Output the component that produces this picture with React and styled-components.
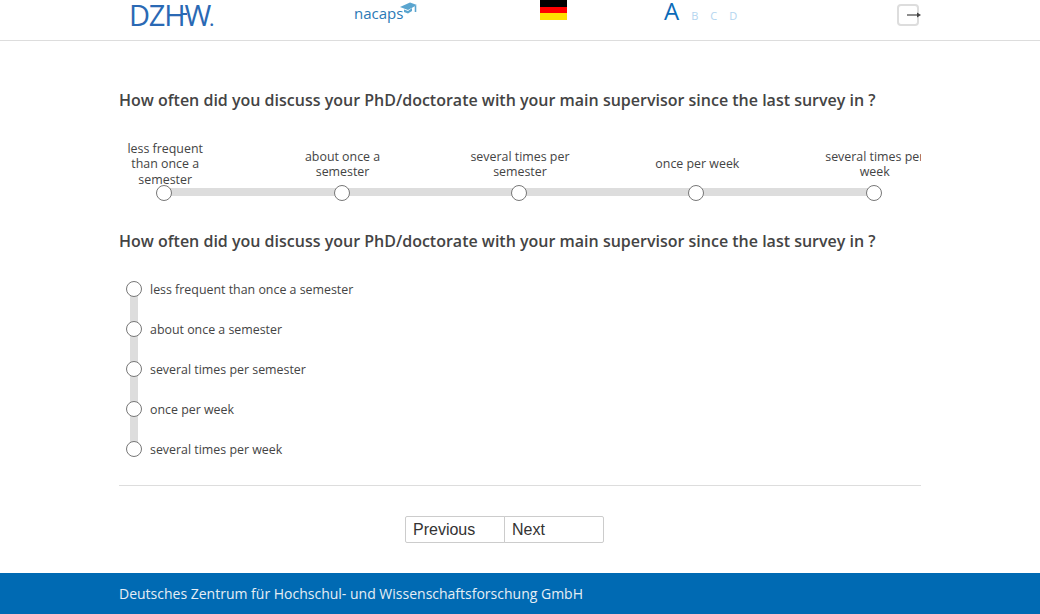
import React from "react";
import styled, { createGlobalStyle } from "styled-components";

const OPTIONS = [
  "less frequent than once a semester",
  "about once a semester",
  "several times per semester",
  "once per week",
  "several times per week",
];
const QUESTION =
  "How often did you discuss your PhD/doctorate with your main supervisor since the last survey in ?";

const App = () => {
  return (
    <Page>
      <GlobalStyle />
      <Header>
        <HeaderInner>
          <DzhwLogo>
            DZH<WPart>W</WPart>
            <Dot>.</Dot>
          </DzhwLogo>
          <NacapsLogo>
            nacaps
            <svg width="17" height="14" viewBox="0 0 17 14">
              <path d="M0 5 L10 0.5 L17 3 L8 8 Z" fill="#5aa5cf" />
              <path d="M4 7.5 L4 10 L8 11.5 L12 9 L12 6 L8 9 Z" fill="#5aa5cf" />
              <path d="M15.5 4 L15.5 10" stroke="#5aa5cf" strokeWidth="1.6" />
            </svg>
          </NacapsLogo>
          <Flag>
            <Stripe color="#000" />
            <Stripe color="#f00" />
            <Stripe color="#ffe000" />
          </Flag>
          <FontSizes>
            <FontSize $active>A</FontSize>
            <FontSize>B</FontSize>
            <FontSize>C</FontSize>
            <FontSize>D</FontSize>
          </FontSizes>
          <LogoutButton>
            <svg width="14" height="8" viewBox="0 0 14 8">
              <path d="M0 4 H11" stroke="#444" strokeWidth="1.2" />
              <path d="M10 1.5 L14 4 L10 6.5 Z" fill="#444" />
            </svg>
          </LogoutButton>
        </HeaderInner>
      </Header>
      <Main>
        <Question>{QUESTION}</Question>
        <Scale>
          {OPTIONS.map((label, i) => (
            <ScaleCell key={label} $last={i === OPTIONS.length - 1}>
              <ScaleLabel $narrow={i === 0}>{label}</ScaleLabel>
              <Radio />
            </ScaleCell>
          ))}
        </Scale>
        <SecondQuestion>{QUESTION}</SecondQuestion>
        <List>
          {OPTIONS.map((label, i) => (
            <ListRow key={label} $last={i === OPTIONS.length - 1}>
              <Radio />
              <ListLabel>{label}</ListLabel>
            </ListRow>
          ))}
        </List>
        <Divider />
        <Pager>
          <PagerButton>Previous</PagerButton>
          <PagerButton $right>Next</PagerButton>
        </Pager>
      </Main>
      <Footer>
        <FooterInner>Deutsches Zentrum für Hochschul- und Wissenschaftsforschung GmbH</FooterInner>
      </Footer>
    </Page>
  );
};

export default App;

const GlobalStyle = createGlobalStyle`
  html, body {
    margin: 0;
    padding: 0;
    background: #fff;
  }
  * {
    box-sizing: border-box;
  }
`;

const Page = styled.div`
  width: 1040px;
  height: 614px;
  display: flex;
  flex-direction: column;
  overflow: hidden;
  font-family: "Open Sans", sans-serif;
  color: #444;
`;

const Header = styled.header`
  height: 41px;
  border-bottom: 1px solid #ddd;
  flex-shrink: 0;
`;

const HeaderInner = styled.div`
  width: 802px;
  height: 40px;
  margin-left: 119px;
  display: grid;
  grid-template-columns: 235px 186px 124px 233px 1fr;
  overflow: hidden;
`;

const DzhwLogo = styled.div`
  margin: 0 0 0 10px;
  height: 40px;
  font-family: "Open Sans", sans-serif;
  font-weight: 400;
  font-size: 29px;
  line-height: 29px;
  letter-spacing: -1.2px;
  color: #2a69b4;
`;

/* the crossbar of the H runs on into the W */
const WPart = styled.span`
  position: relative;
  letter-spacing: -2px;
  &::before {
    content: "";
    position: absolute;
    left: -3px;
    top: 18px;
    width: 6px;
    height: 2px;
    background: #2a69b4;
  }
`;

const Dot = styled.span`
  font-weight: 600;
  font-size: 18px;
`;

const NacapsLogo = styled.div`
  display: flex;
  align-items: flex-start;
  height: 40px;
  padding-top: 4px;
  font-size: 15px;
  line-height: 18px;
  color: #2a79b5;
  svg {
    margin: -2px 0 0 -3px;
  }
`;

const Flag = styled.div`
  width: 27px;
  height: 20px;
  display: flex;
  flex-direction: column;
`;

const Stripe = styled.div`
  flex: 1;
  background: ${(props) => props.color};
`;

const FontSizes = styled.div`
  display: flex;
  align-items: baseline;
  height: 40px;
  gap: 12px;
  line-height: 22px;
`;

const FontSize = styled.span`
  font-size: ${(props) => (props.$active ? "24px" : "11px")};
  color: ${(props) => (props.$active ? "#0a6ab8" : "#b3d5ef")};
`;

const LogoutButton = styled.div`
  width: 22px;
  height: 22px;
  margin-top: 4px;
  padding: 0 0 0 8px;
  display: flex;
  align-items: center;
  border: 2px solid #ddd;
  border-radius: 4px;
  svg {
    flex-shrink: 0;
  }
`;

const Main = styled.main`
  flex: 1;
  width: 802px;
  margin-left: 119px;
`;

const Question = styled.h2`
  margin: 48px 0 0;
  font-size: 16px;
  line-height: 22px;
  font-weight: 600;
  color: #444;
`;

const SecondQuestion = styled(Question)`
  margin-top: 29px;
`;

const Scale = styled.div`
  width: 802px;
  margin-top: 29px;
  display: flex;
  overflow: hidden;
`;

const ScaleCell = styled.div`
  flex: 0 0 177.4px;
  display: flex;
  flex-direction: column;
  align-items: center;
  position: relative;
  &:first-child {
    margin-left: -43.5px;
  }
  ${(props) =>
    !props.$last &&
    `&::after {
      content: "";
      position: absolute;
      left: 50%;
      width: 100%;
      bottom: 5px;
      height: 8px;
      background: #ddd;
    }`}
`;

const ScaleLabel = styled.div`
  height: 48px;
  width: ${(props) => (props.$narrow ? "84px" : "110px")};
  flex-shrink: 0;
  display: flex;
  align-items: center;
  justify-content: center;
  text-align: center;
  font-size: 12.4px;
  line-height: 15.5px;
  color: #444;
  margin: 0 0 -3px 2px;
`;

const Radio = styled.span`
  display: block;
  position: relative;
  z-index: 1;
  flex-shrink: 0;
  width: 16px;
  height: 16px;
  border-radius: 50%;
  background: #fff;
  border: 1px solid #777;
`;

const List = styled.div`
  margin-top: 17px;
  padding-left: 7px;
`;

const ListRow = styled.div`
  height: 40px;
  display: flex;
  align-items: center;
  gap: 8px;
  position: relative;
  ${(props) =>
    !props.$last &&
    `&::after {
      content: "";
      position: absolute;
      left: 4px;
      top: 20px;
      width: 8px;
      height: 40px;
      background: #ddd;
    }`}
`;

const ListLabel = styled.span`
  font-size: 12.4px;
  color: #444;
`;

const Divider = styled.hr`
  margin: 16px 0 0;
  border: 0;
  border-top: 1px solid #ddd;
`;

const Pager = styled.div`
  margin-top: 30px;
  display: flex;
  justify-content: center;
  padding-right: 31px;
`;

const PagerButton = styled.div`
  width: 100px;
  height: 27px;
  padding-left: 7px;
  font-family: "Liberation Sans", sans-serif;
  font-size: 16px;
  line-height: 25px;
  color: #333;
  border: 1px solid #ccc;
  border-radius: ${(props) => (props.$right ? "0 2px 2px 0" : "2px 0 0 2px")};
  ${(props) => props.$right && "margin-left: -1px;"}
`;

const Footer = styled.footer`
  height: 41px;
  flex-shrink: 0;
  background: #006ab3;
`;

const FooterInner = styled.div`
  margin-left: 119px;
  font-size: 14px;
  line-height: 41px;
  color: #e6eef5;
`;
